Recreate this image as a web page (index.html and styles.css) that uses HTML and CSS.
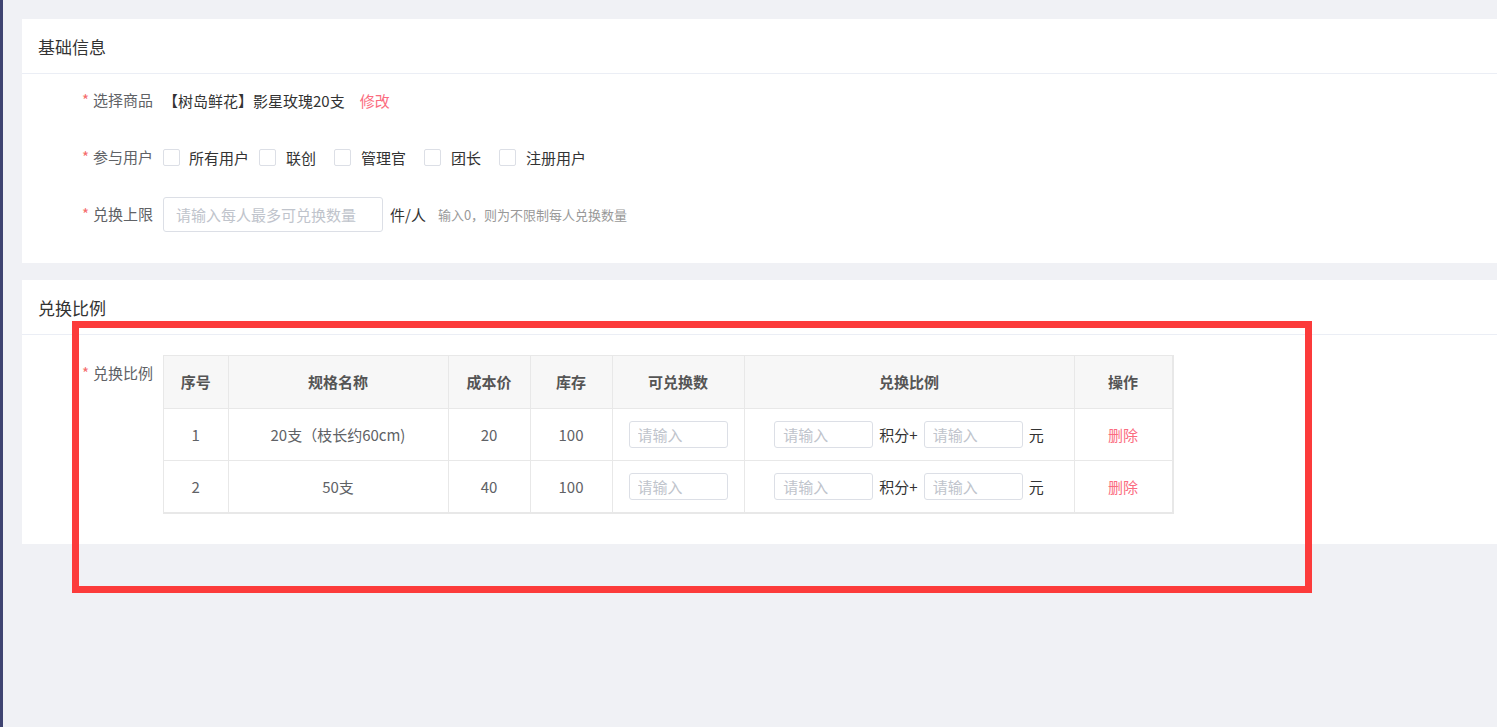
FILE: index.html
```html
<!DOCTYPE html>
<html lang="zh-CN">
<head>
<meta charset="utf-8">
<title>兑换设置</title>
<link rel="stylesheet" href="styles.css">
</head>
<body>
<div class="side-bar"></div>
<main class="main">
  <section class="card card-basic">
    <div class="card-header">基础信息</div>
    <div class="card-body">
      <div class="form-row">
        <div class="form-label"><span class="req">*</span>选择商品</div>
        <div class="form-content">
          <span class="goods">【树岛鲜花】影星玫瑰20支</span>
          <a class="link-red">修改</a>
        </div>
      </div>
      <div class="form-row">
        <div class="form-label"><span class="req">*</span>参与用户</div>
        <div class="form-content">
          <label class="check check-all"><span class="box"></span>所有用户</label>
          <div class="check-group">
            <label class="check"><span class="box"></span>联创</label>
            <label class="check"><span class="box"></span>管理官</label>
            <label class="check"><span class="box"></span>团长</label>
            <label class="check"><span class="box"></span>注册用户</label>
          </div>
        </div>
      </div>
      <div class="form-row">
        <div class="form-label"><span class="req">*</span>兑换上限</div>
        <div class="form-content">
          <input class="input input-limit" placeholder="请输入每人最多可兑换数量">
          <span class="unit">件/人</span>
          <span class="hint">输入0，则为不限制每人兑换数量</span>
        </div>
      </div>
    </div>
  </section>

  <section class="card card-ratio">
    <div class="card-header">兑换比例</div>
    <div class="card-body">
      <div class="form-row">
        <div class="form-label"><span class="req">*</span>兑换比例</div>
        <div class="form-content">
          <div class="table-wrap">
            <table class="table">
              <colgroup>
                <col class="c1"><col class="c2"><col class="c3"><col class="c4"><col class="c5"><col class="c6"><col class="c7">
              </colgroup>
              <thead>
                <tr><th>序号</th><th>规格名称</th><th>成本价</th><th>库存</th><th>可兑换数</th><th>兑换比例</th><th>操作</th></tr>
              </thead>
              <tbody>
                <tr>
                  <td>1</td><td>20支（枝长约60cm)</td><td>20</td><td>100</td>
                  <td><input class="input input-cell" placeholder="请输入"></td>
                  <td><div class="ratio"><input class="input input-cell" placeholder="请输入"><span class="r-txt">积分+</span><input class="input input-cell" placeholder="请输入"><span class="r-txt">元</span></div></td>
                  <td><a class="link-red">删除</a></td>
                </tr>
                <tr>
                  <td>2</td><td>50支</td><td>40</td><td>100</td>
                  <td><input class="input input-cell" placeholder="请输入"></td>
                  <td><div class="ratio"><input class="input input-cell" placeholder="请输入"><span class="r-txt">积分+</span><input class="input input-cell" placeholder="请输入"><span class="r-txt">元</span></div></td>
                  <td><a class="link-red">删除</a></td>
                </tr>
              </tbody>
            </table>
          </div>
        </div>
      </div>
    </div>
  </section>
</main>
<div class="annotation"></div>
</body>
</html>
```

FILE: styles.css
```css
* { box-sizing: border-box; }

html, body {
  margin: 0;
  padding: 0;
  height: 100%;
}

body {
  background: #f0f1f5;
  font-family: "Noto Sans CJK SC", "Noto Sans", "Liberation Sans", sans-serif;
  font-size: 15px;
  color: #333;
  display: flex;
  overflow: hidden;
  position: relative;
}

.side-bar {
  width: 3px;
  flex: 0 0 3px;
  background: #3f4471;
  min-height: 727px;
}

.main {
  flex: 1;
  padding: 19px 0 0 19px;
  display: flex;
  flex-direction: column;
  gap: 17px;
}

.card {
  background: #fff;
}

.card-header {
  height: 55px;
  padding-left: 16px;
  display: flex;
  align-items: center;
  font-size: 17px;
  color: #333;
  border-bottom: 1px solid #ebeef5;
}

.card-basic .card-body {
  padding: 8px 0 31px;
  display: flex;
  flex-direction: column;
  gap: 21px;
}

.card-ratio .card-body {
  padding: 20px 0 30px;
}

.form-row {
  display: flex;
  align-items: flex-start;
}

.form-label {
  width: 141px;
  flex: 0 0 141px;
  padding-right: 10px;
  text-align: right;
  line-height: 36px;
  height: 36px;
  color: #606266;
  font-size: 15px;
}

.req {
  color: #f56c6c;
  margin-right: 4px;
}

.form-content {
  display: flex;
  align-items: center;
  min-height: 36px;
}

.goods {
  color: #333;
}

.link-red {
  color: #fb6c80;
  cursor: pointer;
}

.goods + .link-red {
  margin-left: 15px;
}

.check-group {
  display: flex;
  align-items: center;
  gap: 18px;
}

.check {
  display: inline-flex;
  align-items: center;
  color: #333;
}

.check-all {
  margin-right: 10px;
}

.box {
  width: 17px;
  height: 17px;
  border: 1px solid #dcdfe6;
  border-radius: 2px;
  background: #fff;
  margin-right: 10px;
}

.check-all .box {
  margin-right: 9px;
}

.input {
  font-family: inherit;
  font-size: 15px;
  border: 1px solid #dcdfe6;
  border-radius: 3px;
  color: #606266;
  outline: none;
  background: #fff;
}

.input::placeholder {
  color: #c0c4cc;
}

.input-limit {
  width: 220px;
  height: 35px;
  padding: 0 12px;
}

.unit {
  margin-left: 7px;
  color: #333;
}

.hint {
  margin-left: 12px;
  font-size: 13px;
  color: #999;
}

.table-wrap {
  width: 1011px;
  border: 1px solid #e8e8e8;
  border-right-width: 2px;
  border-bottom-width: 2px;
  background: #fff;
}

.table {
  border-collapse: collapse;
  table-layout: fixed;
  width: 1008px;
}

.c1 { width: 64px; }
.c2 { width: 220px; }
.c3 { width: 82px; }
.c4 { width: 82px; }
.c5 { width: 132px; }
.c6 { width: 330px; }
.c7 { width: 98px; }

.table th,
.table td {
  height: 52px;
  text-align: center;
  border-right: 1px solid #e8e8e8;
  border-bottom: 1px solid #e8e8e8;
  padding: 0;
}

.table th {
  background: #f7f7f7;
  font-weight: bold;
  color: #555;
  font-size: 15px;
}

.table td {
  color: #606266;
}

.table tbody tr:last-child td {
  border-bottom: none;
}

.input-cell {
  width: 99px;
  height: 27px;
  padding: 0 8px;
  vertical-align: middle;
}

.ratio {
  display: flex;
  align-items: center;
  justify-content: center;
}

.r-txt {
  color: #333;
  margin: 0 6px;
}

.r-txt:last-child {
  margin-right: 0;
}

.annotation {
  position: absolute;
  left: 72px;
  top: 321px;
  width: 1240px;
  height: 272px;
  border: 7px solid #fc3b3b;
  pointer-events: none;
}
```
